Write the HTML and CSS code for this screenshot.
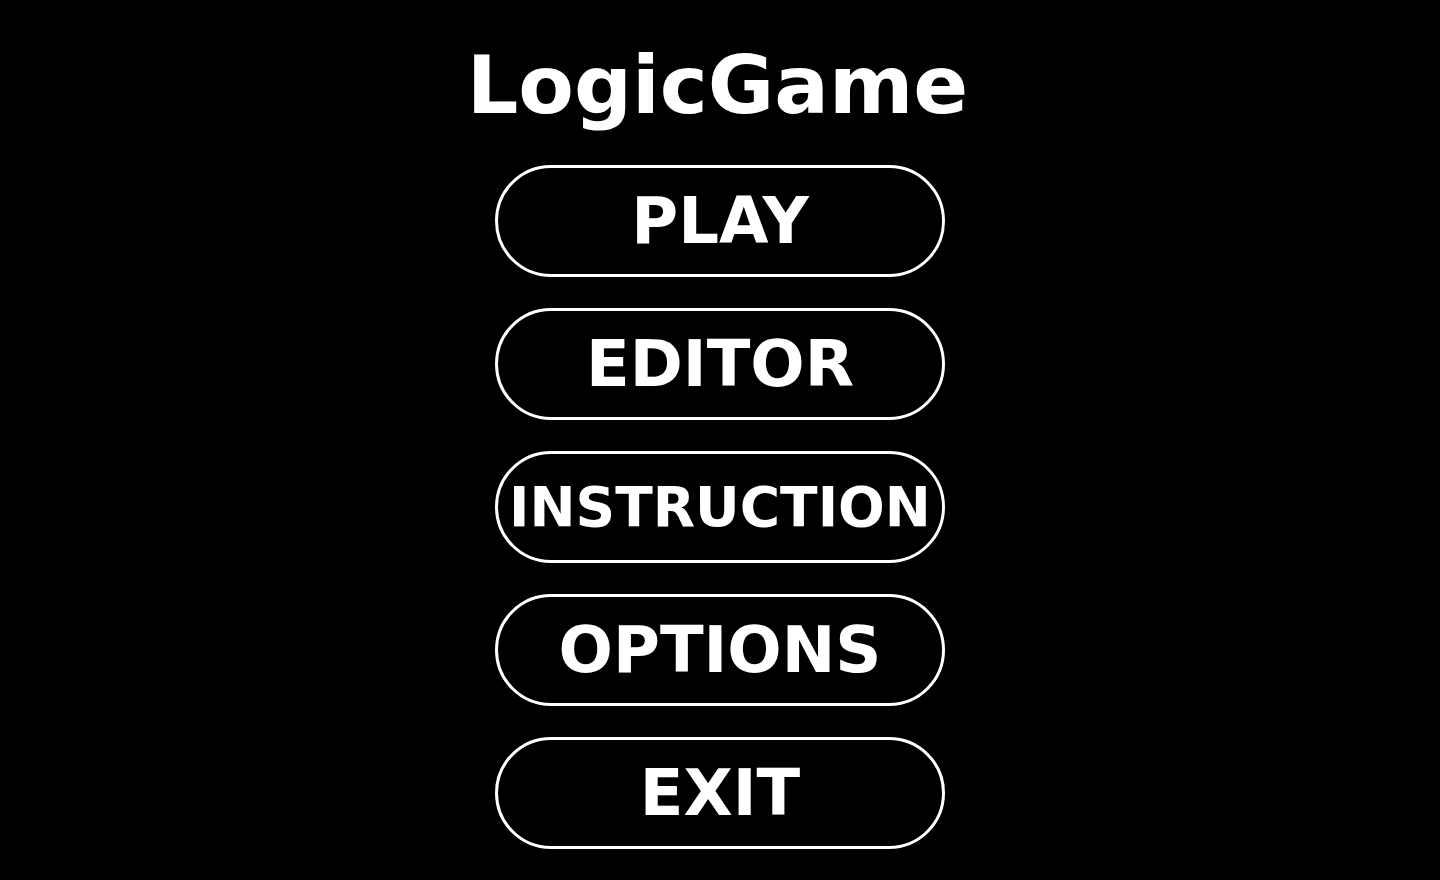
FILE: index.html
```html
<!DOCTYPE html>
<html lang="en">
<head>
<meta charset="utf-8">
<title>LogicGame</title>
<link rel="stylesheet" href="styles.css">
</head>
<body>
<main class="menu">
  <h1 class="title">LogicGame</h1>
  <nav class="buttons">
    <button class="btn">PLAY</button>
    <button class="btn">EDITOR</button>
    <button class="btn btn-small">INSTRUCTION</button>
    <button class="btn">OPTIONS</button>
    <button class="btn">EXIT</button>
  </nav>
</main>
</body>
</html>
```
FILE: styles.css
```css
html, body {
  margin: 0;
  padding: 0;
  background: #000;
  height: 100%;
}
body {
  font-family: "DejaVu Sans", Verdana, sans-serif;
  color: #fff;
  overflow: hidden;
}
.menu {
  display: flex;
  flex-direction: column;
  align-items: center;
  padding-top: 45px;
}
.title {
  margin: 0 0 39px;
  padding-right: 5px;
  font-size: 81px;
  line-height: 1;
  font-weight: bold;
}
.buttons {
  display: flex;
  flex-direction: column;
  align-items: center;
  gap: 31px;
}
.btn {
  box-sizing: border-box;
  width: 450px;
  height: 112px;
  border: 3px solid #fff;
  border-radius: 56px;
  background: #000;
  color: #fff;
  font-family: "DejaVu Sans", Verdana, sans-serif;
  font-weight: bold;
  font-size: 64px;
  line-height: 1;
  padding: 0;
  display: flex;
  align-items: center;
  justify-content: center;
}
.btn-small {
  font-size: 55px;
}
```
